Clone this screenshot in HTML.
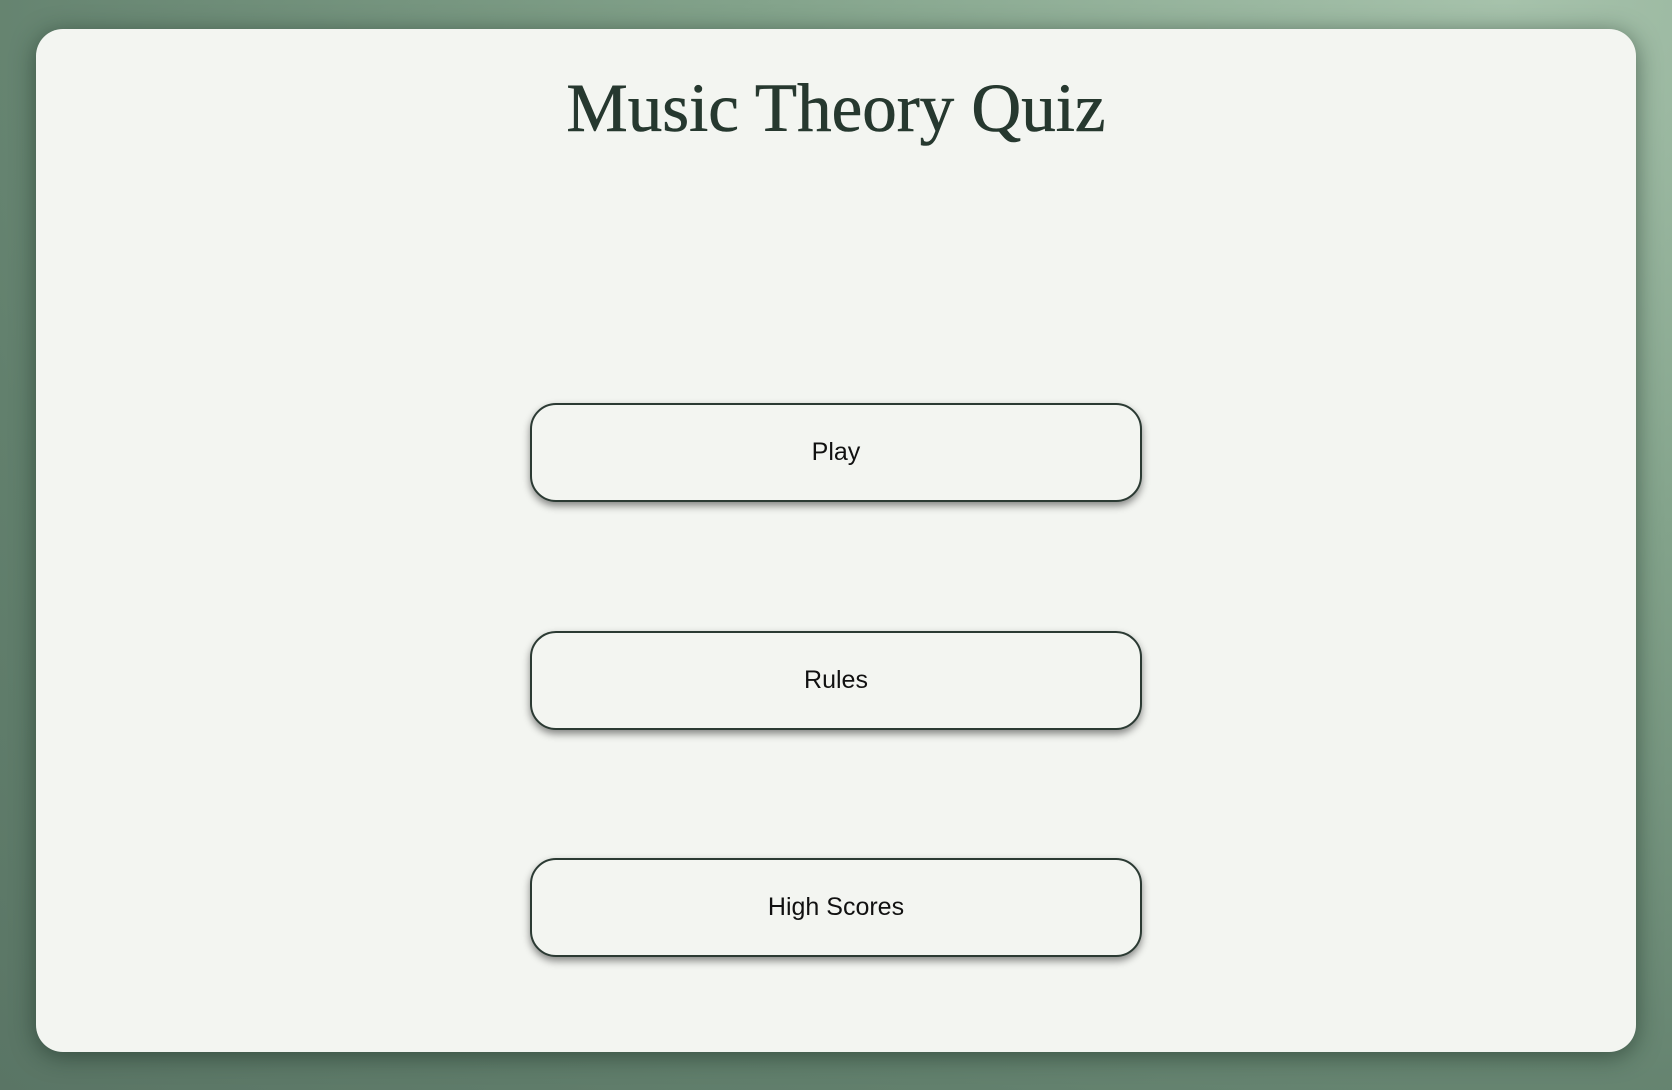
<!DOCTYPE html>
<html><head><style>
html,body{margin:0;padding:0;width:1672px;height:1090px;overflow:hidden}
body{background:radial-gradient(ellipse at 90% 0%,#a6c2ab 0%,#83a38b 35%,#62806d 75%,#5a7565 100%);font-family:"Liberation Sans",sans-serif;position:relative}
.card{position:absolute;left:36px;top:29px;width:1600px;height:1023px;background:#f3f5f1;border-radius:27px;box-shadow:0 4px 24px rgba(20,40,30,.55)}
h1{position:absolute;left:0;right:0;top:39px;margin:0;text-align:center;font-family:"Liberation Serif",serif;font-weight:normal;font-size:69px;line-height:80px;color:#26382f;-webkit-text-stroke:0.6px #26382f}
.btn{position:absolute;left:494px;width:608px;height:95px;border:2px solid #2b3a33;border-radius:26px;box-shadow:0 4px 8px rgba(0,0,0,.45);display:flex;align-items:center;justify-content:center;font-size:25px;color:#111;background:#f3f5f1}
</style></head><body>
<div class="card">
<h1>Music Theory Quiz</h1>
<div class="btn" style="top:374px">Play</div>
<div class="btn" style="top:602px">Rules</div>
<div class="btn" style="top:829px">High Scores</div>
</div>
</body></html>
